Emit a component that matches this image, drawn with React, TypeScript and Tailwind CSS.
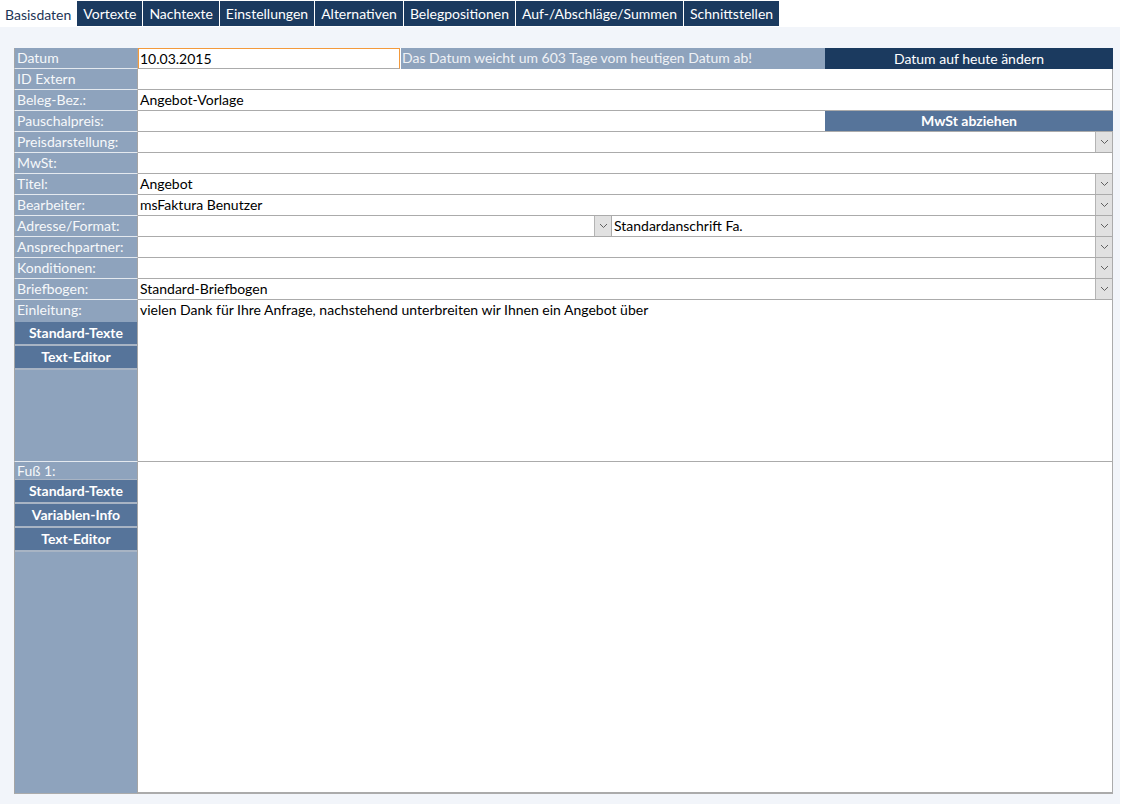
import React from 'react';

const tabs = [
  'Basisdaten',
  'Vortexte',
  'Nachtexte',
  'Einstellungen',
  'Alternativen',
  'Belegpositionen',
  'Auf-/Abschläge/Summen',
  'Schnittstellen',
];

function Chevron() {
  return (
    <div className="w-[17px] h-[20px] bg-[#e1e1e1] border-l border-[#b4b4b4] flex items-center justify-center shrink-0">
      <svg width="9" height="6" viewBox="0 0 9 6">
        <polyline points="1,1 4.5,4.5 8,1" fill="none" stroke="#606060" strokeWidth="1" />
      </svg>
    </div>
  );
}

function Label({ text }: { text: string }) {
  return (
    <div className="w-[124px] shrink-0 h-[21px] bg-[#8ea3bd] border-l border-r border-l-[#a5a5a5] border-r-[#a5a5a5] border-b border-b-[#e4e9ef] pl-[2px] text-[#f6f8fa] leading-[20px]">
      {text}
    </div>
  );
}

function Row({
  label,
  value = '',
  combo = false,
  children,
}: {
  label: string;
  value?: string;
  combo?: boolean;
  children?: React.ReactNode;
}) {
  return (
    <div className="flex h-[21px]">
      <Label text={label} />
      {children ?? (
        <div className="flex-1 flex bg-white border-b border-[#ababab] border-r border-r-[#ababab]">
          <div className="flex-1 pl-[2px] leading-[20px] text-black">{value}</div>
          {combo && <Chevron />}
        </div>
      )}
    </div>
  );
}

function SideButton({ text }: { text: string }) {
  return (
    <div className="h-[24px] bg-[#56749a] border-b-[2px] border-[#a8b4c4] text-white font-bold text-center leading-[22px]">
      {text}
    </div>
  );
}

export default function App() {
  return (
    <div
      className="w-[1130px] h-[804px] bg-white text-[14px] overflow-hidden"
      style={{ fontFamily: 'Lato, "Open Sans", sans-serif' }}
    >
      {/* Tab strip */}
      <div className="flex h-[27px] pt-[1px] bg-white">
        {tabs.map((t, i) =>
          i === 0 ? (
            <div key={t} className="h-[26px] px-[5px] flex items-center text-[#1d3557] bg-white mr-[1px]">
              {t}
            </div>
          ) : (
            <div key={t} className="h-[25px] px-[6px] flex items-center text-white bg-[#1b3a5f] mr-[1px]">
              {t}
            </div>
          )
        )}
      </div>

      <div className="w-[1120px] h-[777px] bg-[#f2f5fa] pt-[21px] pl-[14px]">
        <div className="w-[1099px]">
          {/* Datum */}
          <div className="flex h-[21px]">
            <Label text="Datum" />
            <div className="w-[262px] bg-white border border-[#f39a3c] border-b-[#ababab] pl-[1px] leading-[19px] text-black">
              10.03.2015
            </div>
            <div className="w-[425px] bg-[#8ea3bd] border-l border-[#ffffff] pl-[1px] leading-[20px] text-[#eef1f5]">
              Das Datum weicht um 603 Tage vom heutigen Datum ab!
            </div>
            <div className="flex-1 bg-[#1b3a5f] text-white text-center leading-[21px]">
              Datum auf heute ändern
            </div>
          </div>
          <Row label="ID Extern" />
          <Row label="Beleg-Bez.:" value="Angebot-Vorlage" />
          <Row label="Pauschalpreis:">
            <div className="flex-1 flex">
              <div className="w-[687px] bg-white border-b border-[#ababab]" />
              <div className="flex-1 bg-[#56749a] border-b border-[#ababab] text-white font-bold text-center leading-[20px]">
                MwSt abziehen
              </div>
            </div>
          </Row>
          <Row label="Preisdarstellung:" combo />
          <Row label="MwSt:" />
          <Row label="Titel:" value="Angebot" combo />
          <Row label="Bearbeiter:" value="msFaktura Benutzer" combo />
          <Row label="Adresse/Format:">
            <div className="flex-1 flex">
              <div className="w-[474px] flex bg-white border-b border-[#ababab] border-r border-r-[#ababab]">
                <div className="flex-1" />
                <Chevron />
              </div>
              <div className="flex-1 flex bg-white border-b border-[#ababab] border-r border-r-[#ababab]">
                <div className="flex-1 pl-[2px] leading-[20px] text-black">Standardanschrift Fa.</div>
                <Chevron />
              </div>
            </div>
          </Row>
          <Row label="Ansprechpartner:" combo />
          <Row label="Konditionen:" combo />
          <Row label="Briefbogen:" value="Standard-Briefbogen" combo />

          {/* Einleitung */}
          <div className="flex h-[162px]">
            <div className="w-[124px] shrink-0 bg-[#8ea3bd] border-l border-r border-[#a5a5a5] border-b border-b-[#e4e9ef] flex flex-col">
              <div className="h-[22px] pl-[2px] leading-[20px] text-[#f6f8fa]">Einleitung:</div>
              <SideButton text="Standard-Texte" />
              <SideButton text="Text-Editor" />
            </div>
            <div className="flex-1 bg-white border-b border-[#ababab] border-r border-r-[#ababab] pl-[2px] pt-[1px] leading-[18px] text-black">
              vielen Dank für Ihre Anfrage, nachstehend unterbreiten wir Ihnen ein Angebot über
            </div>
          </div>

          {/* Fuß 1 */}
          <div className="flex h-[332px]">
            <div className="w-[124px] shrink-0 bg-[#8ea3bd] border-l border-r border-[#a5a5a5] border-b border-b-[#ababab] flex flex-col">
              <div className="h-[18px] pl-[2px] leading-[18px] text-[#f6f8fa] border-b border-[#a8b4c4]">Fuß 1:</div>
              <SideButton text="Standard-Texte" />
              <SideButton text="Variablen-Info" />
              <SideButton text="Text-Editor" />
            </div>
            <div className="flex-1 bg-white border-b-2 border-[#ababab] border-r border-r-[#ababab]" />
          </div>
        </div>
      </div>
    </div>
  );
}
